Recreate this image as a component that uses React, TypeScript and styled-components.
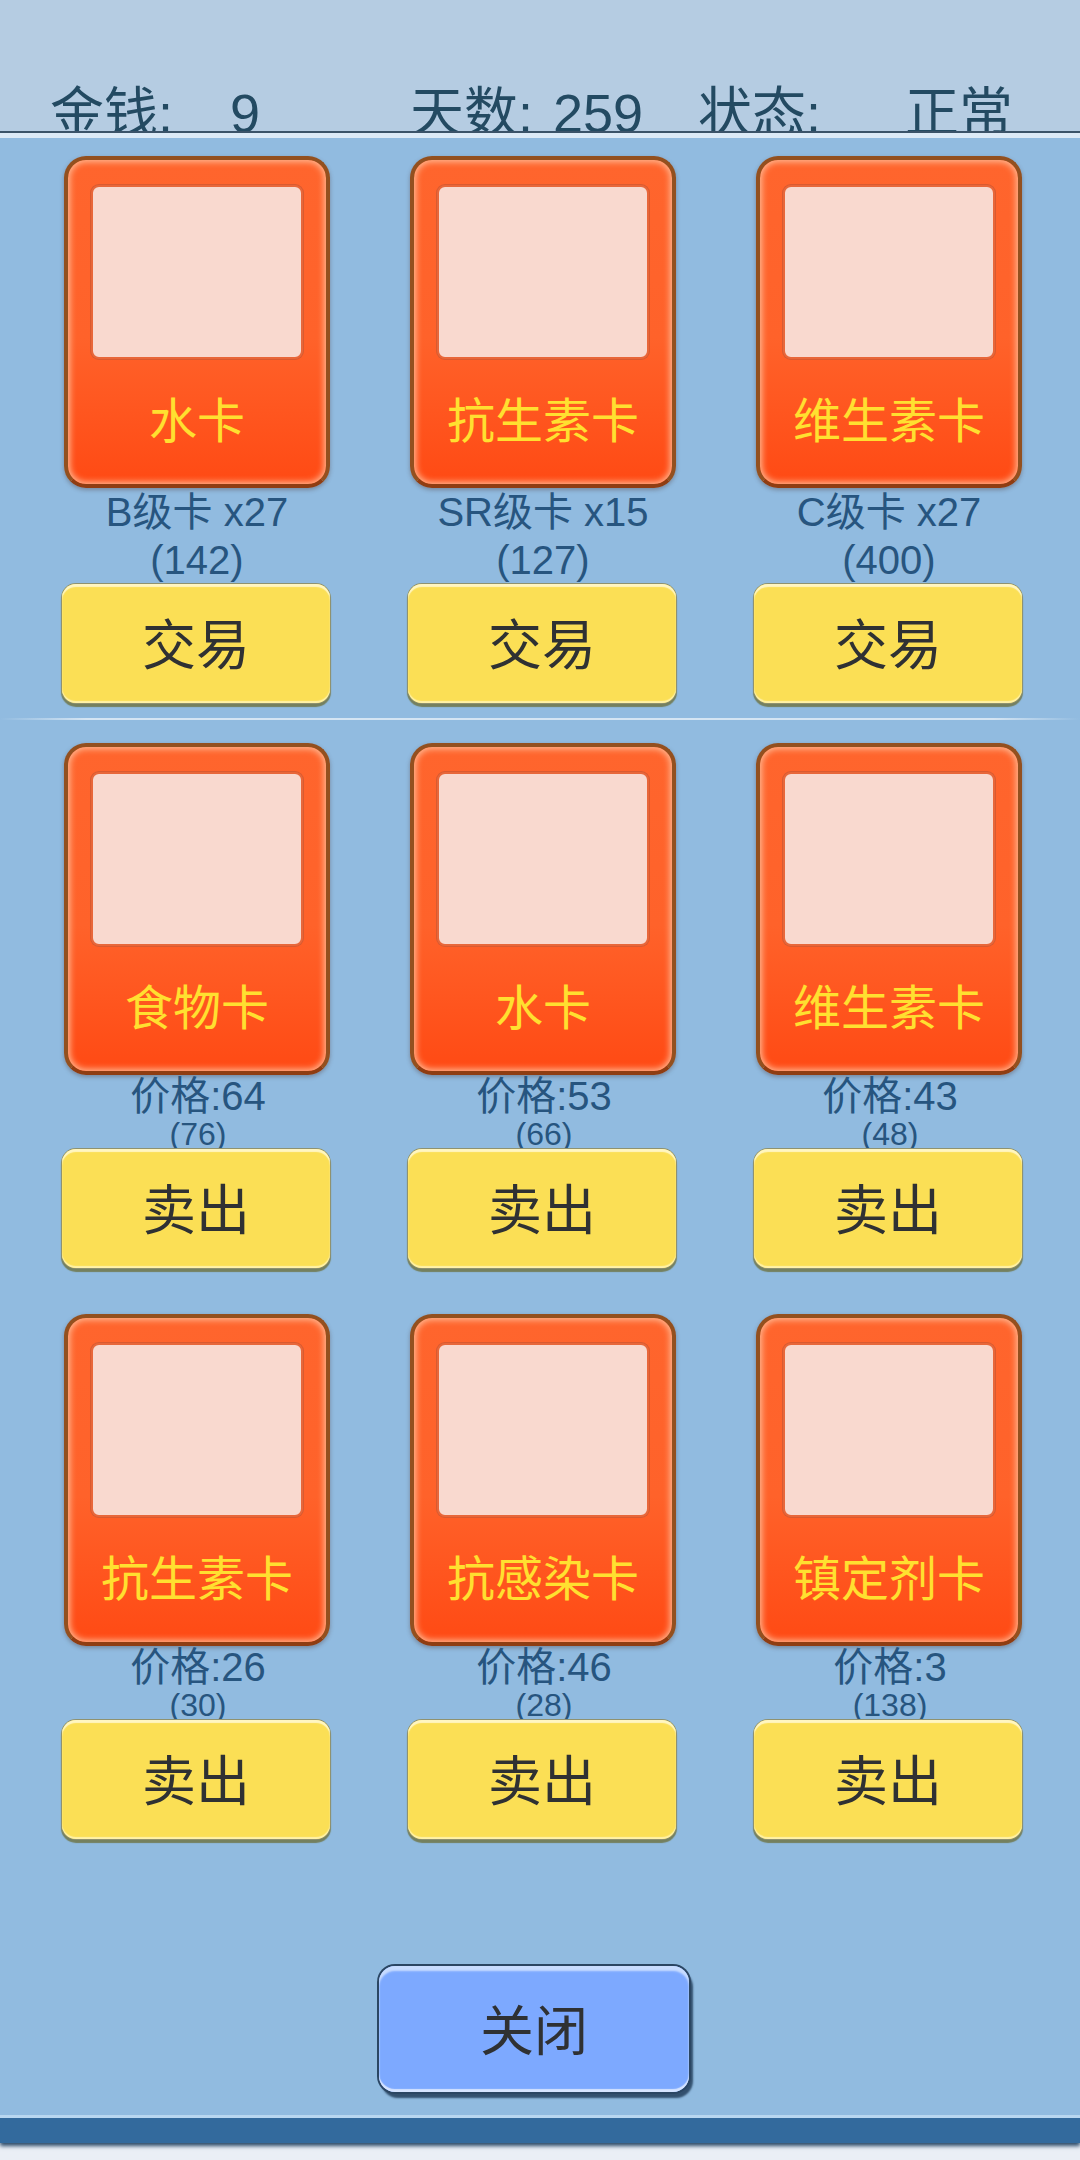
import React from 'react';
import styled, { createGlobalStyle } from 'styled-components';

const GlobalStyle = createGlobalStyle`
  html, body {
    margin: 0;
    padding: 0;
    background: #eaeff6;
    font-family: "Liberation Sans", "Noto Sans CJK SC", sans-serif;
  }
`;

const Page = styled.div`
  width: 1080px;
  height: 2160px;
  overflow: hidden;
  display: flex;
  flex-direction: column;
`;

const Header = styled.div`
  height: 131px;
  flex: none;
  overflow: hidden;
  background: #b5cce2;
  display: flex;
  align-items: flex-start;
  padding: 81px 0 0 50px;
  box-sizing: border-box;
  color: #234a62;
  font-size: 54px;
  line-height: 64px;
  white-space: nowrap;
`;

const HeaderCell = styled.span<{ $width: number }>`
  width: ${(p) => p.$width}px;
  flex: none;
`;

const Panel = styled.div`
  height: 1987px;
  flex: none;
  box-sizing: border-box;
  background: #91bbe0;
  border-top: 2px solid #3b5369;
  box-shadow: inset 0 5px 0 #dceaf7;
  padding-top: 23px;
  display: flex;
  flex-direction: column;
`;

const Grid = styled.div<{ $gap: number }>`
  display: grid;
  grid-template-columns: repeat(3, 346px);
  padding-left: 24px;
  margin-bottom: ${(p) => p.$gap}px;
`;

const Cell = styled.div`
  display: flex;
  flex-direction: column;
  align-items: center;
`;

const Card = styled.div`
  width: 266px;
  height: 332px;
  flex: none;
  box-sizing: border-box;
  border: 4px solid #93501f;
  border-bottom-color: #8f3d12;
  border-radius: 22px;
  background: linear-gradient(#ff652d 0%, #ff622a 55%, #ff4a14 100%);
  box-shadow: inset 0 0 6px 2px #ffb993, 0 2px 4px rgba(80, 60, 60, 0.4);
  padding: 25px 23px 0;
  display: flex;
  flex-direction: column;
  align-items: center;
`;

const CardArt = styled.div`
  width: 100%;
  height: 174px;
  flex: none;
  box-sizing: border-box;
  border: 2px solid #e8673a;
  border-radius: 8px;
  background: #f9d9cf;
  box-shadow: 0 0 0 1px #d95a30;
`;

const CardName = styled.div`
  margin-top: 33px;
  color: #ffe030;
  font-size: 48px;
  line-height: 60px;
  white-space: nowrap;
`;

const InfoBlock = styled.div<{ $height: number; $inset: number }>`
  height: ${(p) => p.$height}px;
  flex: none;
  width: 100%;
  box-sizing: border-box;
  padding-left: ${(p) => p.$inset}px;
  overflow: hidden;
  text-align: center;
  color: #27557f;
  white-space: nowrap;
`;

const MainInfo = styled.div<{ $lineHeight: number }>`
  font-size: 40px;
  line-height: ${(p) => p.$lineHeight}px;
`;

const SubInfo = styled.div<{ $size: number; $lineHeight: number }>`
  font-size: ${(p) => p.$size}px;
  line-height: ${(p) => p.$lineHeight}px;
`;

const ActionButton = styled.button`
  width: 268px;
  height: 119px;
  flex: none;
  margin-right: 2px;
  padding: 0 0 4px;
  border: none;
  border-radius: 14px;
  background: #fbdf55;
  color: #2f3133;
  font-family: inherit;
  font-size: 54px;
  box-shadow: inset 0 3px 1px #fff6c2, inset 0 -2px 1px #fff2a8, 0 0 0 1px #8f9270, 0 3px 1px 1px #74805f;
`;

const Divider = styled.div`
  height: 2px;
  margin-bottom: 23px;
  background: linear-gradient(90deg, #91bbe0 0%, #d5e5f3 8%, #d5e5f3 92%, #91bbe0 100%);
`;

const Footer = styled.div`
  display: flex;
  padding-left: 379px;
`;

const CloseButton = styled.button`
  width: 310px;
  height: 126px;
  padding: 0 0 4px;
  border: none;
  border-radius: 16px;
  background: #7da9ff;
  color: #2f3133;
  font-family: inherit;
  font-size: 54px;
  box-shadow: inset 0 5px 2px #c8dcff, inset 0 -3px 1px #d6e4ff, 0 0 0 2px #2b4663, 3px 5px 2px 1px #33506e;
`;

const BottomBar = styled.div`
  height: 25px;
  flex: none;
  background: #336a9d;
  box-shadow: 0 -3px 0 #b8d6f0, 0 3px 4px #2c4a68;
`;

type CardItem = {
  name: string;
  info: string;
  sub: string;
};

const shopCards: CardItem[] = [
  { name: '水卡', info: 'B级卡 x27', sub: '(142)' },
  { name: '抗生素卡', info: 'SR级卡 x15', sub: '(127)' },
  { name: '维生素卡', info: 'C级卡 x27', sub: '(400)' },
];

const bagRowOne: CardItem[] = [
  { name: '食物卡', info: '价格:64', sub: '(76)' },
  { name: '水卡', info: '价格:53', sub: '(66)' },
  { name: '维生素卡', info: '价格:43', sub: '(48)' },
];

const bagRowTwo: CardItem[] = [
  { name: '抗生素卡', info: '价格:26', sub: '(30)' },
  { name: '抗感染卡', info: '价格:46', sub: '(28)' },
  { name: '镇定剂卡', info: '价格:3', sub: '(138)' },
];

const CardRow = ({
  items,
  action,
  gap,
  trade,
}: {
  items: CardItem[];
  action: string;
  gap: number;
  trade?: boolean;
}) => (
  <Grid $gap={gap}>
    {items.map((item) => (
      <Cell key={item.name + item.info}>
        <Card>
          <CardArt />
          <CardName>{item.name}</CardName>
        </Card>
        <InfoBlock $height={trade ? 96 : 74} $inset={trade ? 0 : 2}>
          <MainInfo $lineHeight={trade ? 49 : 43}>{item.info}</MainInfo>
          <SubInfo $size={trade ? 40 : 32} $lineHeight={trade ? 47 : 33}>
            {item.sub}
          </SubInfo>
        </InfoBlock>
        <ActionButton>{action}</ActionButton>
      </Cell>
    ))}
  </Grid>
);

export default function App() {
  return (
    <Page>
      <GlobalStyle />
      <Header>
        <HeaderCell $width={180}>金钱:</HeaderCell>
        <HeaderCell $width={180}>9</HeaderCell>
        <HeaderCell $width={143}>天数:</HeaderCell>
        <HeaderCell $width={145}>259</HeaderCell>
        <HeaderCell $width={207}>状态:</HeaderCell>
        <HeaderCell $width={120}>正常</HeaderCell>
      </Header>
      <Panel>
        <CardRow items={shopCards} action="交易" gap={15} trade />
        <Divider />
        <CardRow items={bagRowOne} action="卖出" gap={46} />
        <CardRow items={bagRowTwo} action="卖出" gap={127} />
        <Footer>
          <CloseButton>关闭</CloseButton>
        </Footer>
      </Panel>
      <BottomBar />
    </Page>
  );
}
